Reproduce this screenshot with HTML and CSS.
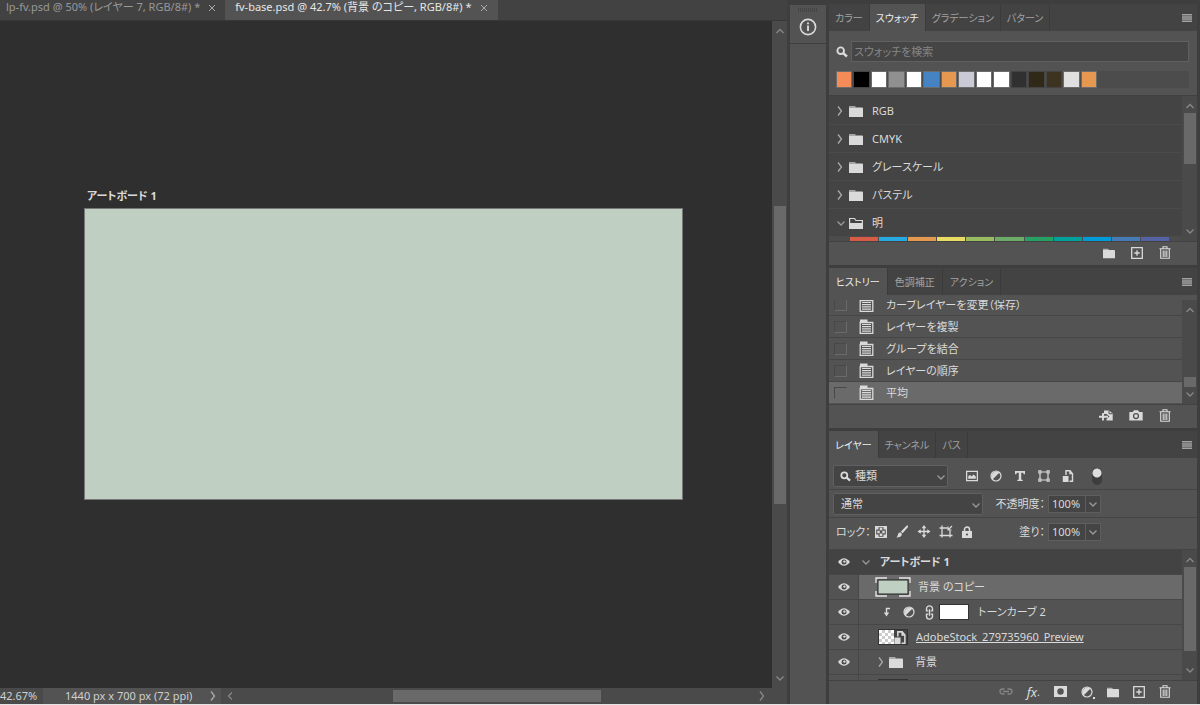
FILE: index.html
```html
<!DOCTYPE html>
<html lang="ja">
<head>
<meta charset="utf-8">
<title>fv-base.psd</title>
<link rel="stylesheet" href="styles.css">
</head>
<body>
<svg class="defs" aria-hidden="true">
  <symbol id="right" viewBox="0 0 8 12"><path d="M2 1.500L5.500 6L2 10.500" fill="none" stroke="currentColor" stroke-width="1.300"/></symbol>
  <symbol id="left" viewBox="0 0 8 12"><path d="M6 2.500L2.500 6L6 9.500" fill="none" stroke="currentColor" stroke-width="1.200"/></symbol>
  <symbol id="down" viewBox="0 0 10 8"><path d="M1.500 2.500L5 6L8.500 2.500" fill="none" stroke="currentColor" stroke-width="1.300"/></symbol>
  <symbol id="up" viewBox="0 0 10 8"><path d="M1.500 6L5 2.500L8.500 6" fill="none" stroke="currentColor" stroke-width="1.300"/></symbol>
  <symbol id="close" viewBox="0 0 8 8"><path d="M1 1L7 7M7 1L1 7" stroke="currentColor" stroke-width="1"/></symbol>
  <symbol id="menu" viewBox="0 0 10 8"><path d="M0 .7H10M0 2.900H10M0 5.100H10M0 7.300H10" stroke="currentColor" stroke-width="1.500"/></symbol>
  <symbol id="search" viewBox="0 0 12 12"><circle cx="4.700" cy="4.700" r="3.300" fill="none" stroke="currentColor" stroke-width="1.900"/><path d="M7 7L11 10.500" stroke="currentColor" stroke-width="2.400"/></symbol>
  <symbol id="folder" viewBox="0 0 14 12"><path d="M0 1H6L7 2.500H0Z" fill="currentColor" opacity=".65"/><path d="M0 2.500H13Q14 2.500 14 3.500V12H0Z" fill="currentColor"/></symbol>
  <symbol id="openfolder" viewBox="0 0 14 12"><path d="M.6 11V1.500H5.500L7 3.500H13.400V11" fill="none" stroke="currentColor" stroke-width="1.200"/><path d="M0 6H14V12H0Z" fill="currentColor"/></symbol>
  <symbol id="new" viewBox="0 0 12 12"><path d="M.7 .7H11.300V11.300H.7ZM6 3.300V8.700M3.300 6H8.700" fill="none" stroke="currentColor" stroke-width="1.300"/></symbol>
  <symbol id="trash" viewBox="0 0 12 13"><path d="M.5 2.800H11.500M4 2.500V.8H8V2.500M1.700 3V12.300H10.300V3M4.200 4.500V11M6 4.500V11M7.800 4.500V11" fill="none" stroke="currentColor" stroke-width="1.100"/></symbol>
  <symbol id="state" viewBox="0 0 14 15"><path d="M.5 3.500V.5H8V3.500Z" fill="currentColor"/><path d="M.7 3.500H13.300V14.300H.7Z" fill="none" stroke="currentColor" stroke-width="1.300"/><path d="M2.500 5.500H11.500M2.500 7.700H11.500M2.500 9.900H11.500M2.500 12.100H11.500" stroke="currentColor" stroke-width="1.200"/></symbol>
  <symbol id="docnew" viewBox="0 0 14 12"><path d="M5 1H10L13.700 4V11H7.500V9.500L10.500 7L7.500 4.500H5Z" fill="currentColor"/><path d="M10 1V4.200H13.500" fill="none" stroke="#535353" stroke-width="1"/><path d="M0 7.300H9M4 3.500V11" stroke="currentColor" stroke-width="1.900"/></symbol>
  <symbol id="camera" viewBox="0 0 14 12"><path fill-rule="evenodd" d="M1 2.500H3.800L5 .8H9L10.200 2.500H13Q13.700 2.500 13.700 3.300V11H.3V3.300Q.3 2.500 1 2.500ZM7 3.500A3.100 3.100 0 1 0 7 9.700A3.100 3.100 0 1 0 7 3.500Z" fill="currentColor"/><circle cx="7" cy="6.600" r="1.800" fill="currentColor"/></symbol>
  <symbol id="image" viewBox="0 0 12 12"><path d="M.6 1.300H11.400V10.700H.6Z" fill="none" stroke="currentColor" stroke-width="1.300"/><path d="M2.200 8.700V6.500L4 4.800L5.500 6.500L7.500 4.500L9.800 6.500V8.700Z" fill="currentColor"/></symbol>
  <symbol id="adjust" viewBox="0 0 12 12"><circle cx="6" cy="6" r="5" fill="none" stroke="currentColor" stroke-width="1.200"/><path d="M9.500 2.500A5 5 0 0 0 2.500 9.500Z" fill="currentColor"/></symbol>
  <symbol id="type" viewBox="0 0 12 12"><path d="M1 1H11V4.300H9.700L9.200 2.700H7.200V9.500L8.700 10V11H3.300V10L4.800 9.500V2.700H2.800L2.300 4.300H1Z" fill="currentColor"/></symbol>
  <symbol id="shape" viewBox="0 0 12 12"><path d="M2 2H10V10H2Z" fill="none" stroke="currentColor" stroke-width="1.200"/><path d="M.3 .3H3.500V3.500H.3ZM8.500 .3H11.700V3.500H8.500ZM.3 8.500H3.500V11.700H.3ZM8.500 8.500H11.700V11.700H8.500Z" fill="currentColor"/><path d="M1.500 1.500H2.400V2.400H1.500ZM9.600 1.500H10.500V2.400H9.600ZM1.500 9.600H2.400V10.500H1.500ZM9.600 9.600H10.500V10.500H9.600Z" fill="#535353"/></symbol>
  <symbol id="smart" viewBox="0 0 12 12"><path d="M4 5V.8H8L10.500 3.800V11.200H7.500" fill="none" stroke="currentColor" stroke-width="1.400"/><path d="M7.300 .8V4.300H11M.8 6H6.500V12H.8Z" fill="currentColor"/></symbol>
  <symbol id="checker" viewBox="0 0 12 12"><path d="M.6 .6H11.400V11.400H.6Z" fill="none" stroke="currentColor" stroke-width="1.200"/><path d="M1 1H3.500V3.500H1ZM4.700 1.800H7.300V4.300H4.700ZM8.500 1H11V3.500H8.500ZM2.300 4.700H4.700V7.300H2.300ZM7.300 4.700H9.700V7.300H7.300ZM4.700 7.500H7.300V10H4.700ZM1 8.500H3.500V11H1ZM8.500 8.500H11V11H8.500Z" fill="currentColor"/></symbol>
  <symbol id="brush" viewBox="0 0 14 14"><path d="M13 .5Q14 1 13.300 2.300L7.700 8.800L5.700 7.200L11.800 .8Q12.500 .2 13 .5ZM5 7.800L7 9.700Q6.500 13.500 .8 13.500Q2.500 12.500 2.500 10.500Q3 8 5 7.800Z" fill="currentColor"/></symbol>
  <symbol id="move" viewBox="0 0 14 14"><path d="M7 2V12M2 7H12" stroke="currentColor" stroke-width="1.400"/><path d="M7 0L9.500 3.500H4.500ZM7 14L4.500 10.500H9.500ZM0 7L3.500 4.500V9.500ZM14 7L10.500 9.500V4.500Z" fill="currentColor"/></symbol>
  <symbol id="crop" viewBox="0 0 14 13"><path d="M3 .5V12.500M.5 3H8.500M11 5.500V12.500M.5 10.500H13.500" fill="none" stroke="currentColor" stroke-width="1.300"/><path d="M9 1.500V5H12.500M9.500 4.500L13 1" fill="none" stroke="currentColor" stroke-width="1.200"/></symbol>
  <symbol id="lock" viewBox="0 0 10 12"><path d="M2.500 5.500V3.500A2.500 2.500 0 0 1 7.500 3.500V5.500" fill="none" stroke="currentColor" stroke-width="1.500"/><path d="M0 5H10V12H0Z" fill="currentColor"/><circle cx="5" cy="8.500" r="1.100" fill="#535353"/></symbol>
  <symbol id="eye" viewBox="0 0 12 10"><path d="M0 5Q6 -2.500 12 5Q6 12.500 0 5Z" fill="currentColor"/><circle cx="6" cy="5" r="2.500" fill="#484848"/><circle cx="6.400" cy="4.600" r="1.200" fill="currentColor"/></symbol>
  <symbol id="clip" viewBox="0 0 8 10"><path d="M7 1.500H3.500V7" fill="none" stroke="currentColor" stroke-width="1.400"/><path d="M.8 5.500H6.200L3.500 9.500Z" fill="currentColor"/></symbol>
  <symbol id="chain" viewBox="0 0 8 14"><path d="M1.200 5.500V3.500A2.800 2.700 0 0 1 6.800 3.500V5.500M1.200 8.500V10.500A2.800 2.700 0 0 0 6.800 10.500V8.500M4 4V10M.6 5.500H2.800M5.200 5.500H7.400M.6 8.500H2.800M5.200 8.500H7.400" fill="none" stroke="currentColor" stroke-width="1.300"/></symbol>
  <symbol id="link" viewBox="0 0 14 8"><path d="M5.500 6.500H3.500A2.500 2.500 0 0 1 3.500 1.500H5.500M8.500 1.500H10.500A2.500 2.500 0 0 1 10.500 6.500H8.500M4 4H10" fill="none" stroke="currentColor" stroke-width="1.300"/></symbol>
  <symbol id="mask" viewBox="0 0 12 10"><path fill-rule="evenodd" d="M0 0H12V10H0ZM6 2A3 3 0 1 0 6 8A3 3 0 1 0 6 2Z" fill="currentColor"/></symbol>
  <symbol id="info" viewBox="0 0 18 18"><circle cx="9" cy="9" r="7.600" fill="none" stroke="currentColor" stroke-width="1.600"/><path d="M9 7.500V13M9 4.500V6.300" stroke="currentColor" stroke-width="1.900"/></symbol>
</svg>

<div class="app">
  <main class="document">
    <div class="doc-tabs">
      <div class="doc-tab"><button>lp-fv.psd @ 50% (レイヤー 7, RGB/8#) *</button><button aria-label="閉じる"><svg class="s8"><use href="#close"/></svg></button></div>
      <div class="doc-tab active"><button>fv-base.psd @ 42.7% (背景 のコピー, RGB/8#) *</button><button aria-label="閉じる"><svg class="s8"><use href="#close"/></svg></button></div>
    </div>
    <div class="workspace">
      <div class="canvas">
        <div class="artboard"><span class="artboard-name">アートボード 1</span><div class="artboard-fill"></div></div>
      </div>
      <div class="scroll doc-scroll"><svg class="s10"><use href="#up"/></svg><div class="track"><div class="thumb"></div></div><svg class="s10"><use href="#down"/></svg></div>
    </div>
    <footer class="status">
      <span class="zoom">42.67%</span>
      <button class="doc-size"><span>1440 px x 700 px (72 ppi)</span><svg class="chev"><use href="#right"/></svg></button>
      <div class="hscroll"><svg class="chev"><use href="#left"/></svg><div class="htrack"><div class="hthumb"></div></div><svg class="chev"><use href="#right"/></svg></div>
    </footer>
  </main>

  <aside class="dock"><button aria-label="情報"><span class="grip"></span><svg class="s18"><use href="#info"/></svg></button></aside>

  <aside class="panels">
    <section class="panel swatches">
      <div class="tabs"><button>カラー</button><button class="active">スウォッチ</button><button>グラデーション</button><button>パターン</button><button class="menu" aria-label="メニュー"><svg><use href="#menu"/></svg></button></div>
      <div class="swatch-head">
        <label class="find"><svg class="s12"><use href="#search"/></svg><input type="text" placeholder="スウォッチを検索" aria-label="スウォッチを検索"></label>
        <div class="recent"><i class="c1"></i><i class="c2"></i><i class="c3"></i><i class="c4"></i><i class="c3"></i><i class="c5"></i><i class="c6"></i><i class="c7"></i><i class="c3"></i><i class="c3"></i><i class="c8"></i><i class="c9"></i><i class="c10"></i><i class="c11"></i><i class="c6"></i></div>
      </div>
      <div class="list-area swatch-list">
        <div class="list">
          <div class="group"><svg class="chev"><use href="#right"/></svg><svg class="folder"><use href="#folder"/></svg><span>RGB</span></div>
          <div class="group"><svg class="chev"><use href="#right"/></svg><svg class="folder"><use href="#folder"/></svg><span>CMYK</span></div>
          <div class="group"><svg class="chev"><use href="#right"/></svg><svg class="folder"><use href="#folder"/></svg><span>グレースケール</span></div>
          <div class="group"><svg class="chev"><use href="#right"/></svg><svg class="folder"><use href="#folder"/></svg><span>パステル</span></div>
          <div class="group"><svg class="s10 muted"><use href="#down"/></svg><svg class="folder"><use href="#openfolder"/></svg><span>明</span></div>
          <div class="brights"><i class="b1"></i><i class="b2"></i><i class="b3"></i><i class="b4"></i><i class="b5"></i><i class="b6"></i><i class="b7"></i><i class="b8"></i><i class="b9"></i><i class="b10"></i><i class="b11"></i></div>
        </div>
        <div class="scroll"><svg class="s10"><use href="#up"/></svg><div class="track"><div class="thumb"></div></div><svg class="s10"><use href="#down"/></svg></div>
      </div>
      <div class="actions"><button aria-label="新規グループ"><svg class="s12"><use href="#folder"/></svg></button><button aria-label="新規スウォッチ"><svg class="s12"><use href="#new"/></svg></button><button aria-label="削除"><svg class="s13"><use href="#trash"/></svg></button></div>
    </section>

    <section class="panel history">
      <div class="tabs"><button class="active">ヒストリー</button><button>色調補正</button><button>アクション</button><button class="menu" aria-label="メニュー"><svg><use href="#menu"/></svg></button></div>
      <div class="list-area history-list">
        <div class="list">
          <label class="step"><input type="checkbox"><svg><use href="#state"/></svg><span>カーブレイヤーを変更（保存）</span></label>
          <label class="step"><input type="checkbox"><svg><use href="#state"/></svg><span>レイヤーを複製</span></label>
          <label class="step"><input type="checkbox"><svg><use href="#state"/></svg><span>グループを結合</span></label>
          <label class="step"><input type="checkbox"><svg><use href="#state"/></svg><span>レイヤーの順序</span></label>
          <label class="step selected"><input type="checkbox"><svg><use href="#state"/></svg><span>平均</span></label>
        </div>
        <div class="scroll"><svg class="s10"><use href="#up"/></svg><div class="track"><div class="thumb"></div></div><svg class="s10"><use href="#down"/></svg></div>
      </div>
      <div class="actions"><button aria-label="新規ドキュメント"><svg class="s14"><use href="#docnew"/></svg></button><button aria-label="スナップショット"><svg class="s14"><use href="#camera"/></svg></button><button aria-label="削除"><svg class="s13"><use href="#trash"/></svg></button></div>
    </section>

    <section class="panel layers">
      <div class="tabs"><button class="active">レイヤー</button><button>チャンネル</button><button>パス</button><button class="menu" aria-label="メニュー"><svg><use href="#menu"/></svg></button></div>
      <div class="filter-row">
        <div class="pick kind"><svg class="pick-icon"><use href="#search"/></svg><select aria-label="フィルター"><option>種類</option></select><svg class="pick-arrow"><use href="#down"/></svg></div>
        <div class="filters">
          <button aria-label="ピクセル"><svg class="s12"><use href="#image"/></svg></button><button aria-label="調整"><svg class="s12"><use href="#adjust"/></svg></button><button aria-label="テキスト"><svg class="s12"><use href="#type"/></svg></button><button aria-label="シェイプ"><svg class="s12"><use href="#shape"/></svg></button><button aria-label="スマートオブジェクト"><svg class="s12"><use href="#smart"/></svg></button>
        </div>
        <button class="toggle" aria-label="フィルターの切替"></button>
      </div>
      <div class="blend-row">
        <div class="pick blend"><select aria-label="描画モード"><option>通常</option></select><svg class="pick-arrow"><use href="#down"/></svg></div>
        <label class="amount"><span>不透明度：</span><input type="text" value="100%"></label><button class="drop" aria-label="不透明度を選択"><svg class="s10"><use href="#down"/></svg></button>
      </div>
      <div class="lock-row">
        <div class="locks"><span>ロック：</span><button aria-label="透明"><svg class="s12"><use href="#checker"/></svg></button><button aria-label="画像"><svg class="s14"><use href="#brush"/></svg></button><button aria-label="位置"><svg class="s14"><use href="#move"/></svg></button><button aria-label="アートボード"><svg class="s14"><use href="#crop"/></svg></button><button aria-label="すべて"><svg class="s12"><use href="#lock"/></svg></button></div>
        <label class="amount"><span>塗り：</span><input type="text" value="100%"></label><button class="drop" aria-label="塗りを選択"><svg class="s10"><use href="#down"/></svg></button>
      </div>
      <div class="list-area layer-list">
        <div class="list">
          <div class="layer board"><button class="eye" aria-label="表示"><svg><use href="#eye"/></svg></button><div class="entry"><svg class="s10 muted"><use href="#down"/></svg><b>アートボード 1</b></div></div>
          <div class="layer selected"><button class="eye" aria-label="表示"><svg><use href="#eye"/></svg></button><div class="entry copy"><svg class="thumbnail" viewBox="0 0 36 20"><path d="M3 3H33V17H3Z" fill="#bfd0c3" stroke="#222"/><path d="M1 6V1H12M24 1H35V6M35 14V19H24M12 19H1V14" fill="none" stroke="#e8e8e8" stroke-width="1.300"/></svg><span>背景 のコピー</span></div></div>
          <div class="layer"><button class="eye" aria-label="表示"><svg><use href="#eye"/></svg></button><div class="entry curve"><svg class="clip"><use href="#clip"/></svg><svg class="s12"><use href="#adjust"/></svg><svg class="chain"><use href="#chain"/></svg><i class="white"></i><span>トーンカーブ 2</span></div></div>
          <div class="layer"><button class="eye" aria-label="表示"><svg><use href="#eye"/></svg></button><div class="entry stock"><div class="preview"><svg class="s14"><use href="#smart"/></svg></div><u>AdobeStock_279735960_Preview</u></div></div>
          <div class="layer"><button class="eye" aria-label="表示"><svg><use href="#eye"/></svg></button><div class="entry back"><svg class="chev"><use href="#right"/></svg><svg class="folder"><use href="#folder"/></svg><span>背景</span></div></div>
          <div class="layer"><span class="eye"></span><div class="entry stock"><i class="dark"></i></div></div>
        </div>
        <div class="scroll"><svg class="s10"><use href="#up"/></svg><div class="track"><div class="thumb"></div></div><svg class="s10"><use href="#down"/></svg></div>
      </div>
      <div class="actions"><button class="dim" aria-label="リンク"><svg class="s14"><use href="#link"/></svg></button><button class="fx">fx<small>.</small></button><button aria-label="マスク"><svg class="mask"><use href="#mask"/></svg></button><button class="more" aria-label="調整レイヤー"><svg class="s12"><use href="#adjust"/></svg></button><button aria-label="新規グループ"><svg class="s12"><use href="#folder"/></svg></button><button aria-label="新規レイヤー"><svg class="s12"><use href="#new"/></svg></button><button aria-label="削除"><svg class="s13"><use href="#trash"/></svg></button></div>
    </section>
  </aside>
</div>
</body>
</html>
```

FILE: styles.css
```css
* { box-sizing: border-box; }
body {
  margin: 0;
  background: #e4e4e4;
  color: #dadada;
  font: 11px/16px "Noto Sans", "Noto Sans CJK JP", sans-serif;
  font-feature-settings: "palt";
}
button, input, select { margin: 0; padding: 0; border: 0; background: none; color: inherit; font: inherit; font-feature-settings: inherit; }
svg { display: block; flex: none; }
.defs { position: absolute; width: 0; height: 0; }
.s8 { width: 8px; height: 8px; }
.s10 { width: 10px; height: 8px; }
.s12 { width: 12px; height: 12px; }
.s13 { width: 12px; height: 13px; }
.s14 { width: 14px; height: 13px; }
.s18 { width: 18px; height: 18px; }
.chev { width: 8px; height: 12px; color: #aaa; }
.folder { width: 14px; height: 12px; }
.muted { color: #999; }

.app {
  display: grid;
  grid-template-columns: minmax(0, 1fr) 36px 368px;
  gap: 3px;
  height: 100vh;
  padding-right: 3px;
  background: #3e3e3e;
  border-bottom: 1px solid #e4e4e4;
}

.document { display: flex; flex-direction: column; min-width: 0; }
.doc-tabs { display: flex; height: 21px; background: #424242; border-bottom: 1px solid #383838; }
.doc-tab { display: flex; align-items: flex-start; gap: 8px; padding: 0 9px 0 6px; color: #989898; white-space: nowrap; }
.doc-tab button { height: 14px; line-height: 14px; }
.doc-tab.active { padding: 0 10px; background: #535353; color: #e6e6e6; }
.doc-tab svg { margin-top: 2px; color: #aaa; }
.workspace { display: flex; flex: 1; min-height: 0; }
.canvas { position: relative; flex: 1; background: #2f2f2f; overflow: hidden; }
.artboard { position: absolute; left: 84px; top: 167px; width: 599px; }
.artboard-name { display: block; padding: 0 3px 4px; font-weight: bold; }
.artboard-fill { height: 292px; background: #bfd0c3; border: 1px solid #777; }

.scroll { display: flex; flex-direction: column; align-items: center; flex: none; width: 15px; padding: 6px 0; background: #4a4a4a; color: #888; }
.track { flex: 1; width: 12px; margin: 3px 0; }
.thumb { width: 100%; background: #696969; }
.doc-scroll .thumb { height: 47%; margin-top: 168px; }
.status { display: flex; align-items: center; height: 16px; background: #4a4a4a; color: #d0d0d0; }
.zoom { width: 43px; }
.doc-size { display: flex; align-items: center; justify-content: space-between; width: 178px; height: 16px; padding: 0 4px 0 22px; background: #535353; }
.hscroll { display: flex; flex: 1; align-items: center; padding: 0 21px 0 5px; }
.hscroll .chev { color: #888; }
.htrack { flex: 1; height: 12px; padding-left: 159px; }
.hthumb { width: 57%; height: 12px; background: #696969; }

.dock { margin-top: 5px; background: #535353; }
.dock button { display: flex; flex-direction: column; align-items: center; gap: 6px; width: 100%; height: 39px; padding-top: 3px; border-bottom: 1px solid #3e3e3e; }
.grip { width: 20px; height: 4px; background: repeating-linear-gradient(90deg, #444 0 1px, #535353 1px 2px); }

.panels { display: flex; flex-direction: column; gap: 3px; min-width: 0; padding-top: 4px; }
.panel { display: flex; flex-direction: column; min-height: 0; background: #535353; }
.swatches { flex: 261 1 0; }
.history { flex: 160 1 0; }
.layers { flex: 273 1 0; }
.tabs { display: flex; flex: none; height: 27px; background: #434343; color: #a2a2a2; font-size: 10px; }
.tabs button { padding: 0 6px; border-right: 1px solid #3b3b3b; white-space: nowrap; }
.history .tabs button { padding: 0 7px; }
.tabs .active { background: #535353; color: #eee; }
.tabs .menu { margin-left: auto; padding: 0 5px; border: 0; }
.history .tabs .menu { padding: 0 5px; }
.menu svg { width: 10px; height: 8px; }
.swatch-head { flex: none; height: 65px; padding: 10px 8px 8px 7px; border-bottom: 1px solid #404040; }
.find { display: flex; align-items: center; gap: 3px; }
.find input { flex: 1; height: 21px; padding: 0 2px; background: #454545; border: 1px solid #606060; }
.find input::placeholder { color: #858585; opacity: 1; }
.recent { display: grid; grid-template-columns: repeat(15, 1fr); gap: 1px; height: 17px; margin-top: 9px; padding-right: 92px; background: #4c4c4c; }
.recent i { border: 1px solid #6b6b6b; }
.c1 { background: #f58c58; } .c2 { background: #000; } .c3 { background: #fff; } .c4 { background: #909090; }
.c5 { background: #4583c2; } .c6 { background: #e69850; } .c7 { background: #c8cad6; } .c8 { background: #303030; }
.c9 { background: #302918; } .c10 { background: #3c3321; } .c11 { background: #e0e0e0; }
.recent .c2, .recent .c8, .recent .c9, .recent .c10 { border-color: #444; }

.list-area { display: flex; flex: 1; min-height: 0; overflow: hidden; }
.list { flex: 1; min-width: 0; overflow: hidden; }
.swatch-list .list { padding-top: 1px; background: #444; }
.group { display: flex; align-items: center; gap: 5px; height: 28px; padding-left: 7px; border-bottom: 1px solid #4a4a4a; }
.group .chev { width: 8px; }
.group .s10 { margin-right: -2px; }
.group span { padding-left: 4px; }
.brights { display: grid; grid-template-columns: repeat(11, 1fr); gap: 1px; padding: 0 13px 0 21px; background: #4c4c4c; }
.brights i { height: 20px; }
.b1 { background: #d85b48; } .b2 { background: #27aae1; } .b3 { background: #e39a4f; } .b4 { background: #e9dc62; }
.b5 { background: #9abc61; } .b6 { background: #6cab68; } .b7 { background: #27a163; } .b8 { background: #00a19a; }
.b9 { background: #009bd9; } .b10 { background: #467bb5; } .b11 { background: #5563a5; }
.swatch-list .thumb { height: 51px; }
.actions { display: flex; flex: none; align-items: center; justify-content: flex-end; height: 24px; padding: 0 26px 2px 0; gap: 16px; border-top: 1px solid #424242; }
.actions button { display: flex; align-items: center; }

.history-list { margin-top: 5px; }
.history-list .list { display: flex; flex-direction: column; justify-content: flex-end; padding-bottom: 1px; }
.step { display: flex; flex: none; align-items: center; height: 22px; padding-left: 5px; gap: 12px; border-top: 1px solid #464646; }
.step input { appearance: none; width: 13px; height: 12px; border: 1px solid #484848; border-right-color: #6a6a6a; border-bottom-color: #6a6a6a; }
.step svg { width: 15px; height: 15px; }
.step.selected { background: #6a6a6a; }
.history-list .track { display: flex; align-items: flex-end; }
.history-list .thumb { height: 10px; }

.filter-row, .blend-row, .lock-row { display: flex; flex: none; align-items: center; padding: 0 4px; border-bottom: 1px solid #444; }
.filter-row { height: 32px; padding-top: 5px; }
.blend-row { height: 28px; }
.lock-row { height: 32px; padding-bottom: 4px; }
.pick { position: relative; height: 22px; }
.pick select { appearance: none; width: 100%; height: 22px; padding: 0 7px; background: #444; border: 1px solid #606060; border-radius: 2px; }
.kind { width: 115px; }
.kind select { padding-left: 21px; }
.blend { width: 150px; }
.pick-icon { position: absolute; left: 7px; top: 6px; width: 11px; height: 11px; }
.pick-arrow { position: absolute; right: 2px; top: 8px; width: 10px; height: 8px; color: #999; }
.filters { display: flex; gap: 12px; margin-left: 18px; }
.toggle { width: 10px; height: 17px; margin-left: 18px; border-radius: 5px; background: radial-gradient(circle at 5px 5px, #ddd 4px, #3d3d3d 5px); }
.amount { display: flex; align-items: center; justify-content: flex-end; flex: none; }
.amount span { margin-right: 3px; }
.amount input { width: 38px; height: 18px; padding-left: 3px; background: #444; border: 1px solid #5e5e5e; }
.drop { display: grid; place-items: center; width: 15px; height: 18px; background: #444; border: 1px solid #5e5e5e; border-left: 0; color: #999; }
.blend-row .amount { width: 103px; }
.locks { display: flex; align-items: center; gap: 8px; width: 152px; padding-left: 3px; }
.locks span { white-space: nowrap; margin-right: -4px; }
.lock-row .amount { width: 101px; }

.layer { display: flex; height: 25px; border-bottom: 1px solid #474747; white-space: nowrap; }
.eye { display: grid; place-items: center; flex: none; width: 30px; border-right: 1px solid #474747; }
.eye svg { width: 12px; height: 10px; }
.entry { display: flex; flex: 1; align-items: center; gap: 9px; padding-left: 2px; }
.board { background: #434343; }
.board .eye { border-color: #434343; }
.selected .entry { background: #6a6a6a; }
.copy { padding-left: 16px; gap: 7px; }
.thumbnail { width: 36px; height: 20px; }
.curve { padding-left: 24px; gap: 5px; }
.clip { width: 8px; height: 10px; margin-right: 7px; }
.chain { width: 9px; height: 15px; margin-left: 5px; }
.white { width: 30px; height: 16px; background: #fff; border: 1px solid #333; margin-right: 4px; }
.stock { padding-left: 19px; gap: 8px; }
.stock u { text-decoration-skip-ink: none; }
.preview { display: flex; align-items: center; justify-content: flex-end; width: 30px; height: 16px; border: 1px solid #333; background: linear-gradient(90deg, transparent 15px, #444 15px), repeating-conic-gradient(#ccc 0 25%, #fff 0 50%) 0 0 / 6px 6px; }
.back { padding-left: 18px; gap: 4px; }
.back span { padding-left: 8px; }
.dark { align-self: flex-start; width: 30px; height: 14px; margin-top: 4px; background: #333; }
.layer-list .thumb { height: 88%; }
.layers .actions { gap: 14px; }
.dim { color: #858585; }
.fx { font: italic 13px/16px "Noto Sans", sans-serif; }
.fx small { font-style: normal; }
.mask { width: 13px; height: 11px; }
.more { position: relative; }
.more::after { content: ""; position: absolute; right: -2px; bottom: -1px; width: 2px; height: 2px; background: #ddd; }
```
